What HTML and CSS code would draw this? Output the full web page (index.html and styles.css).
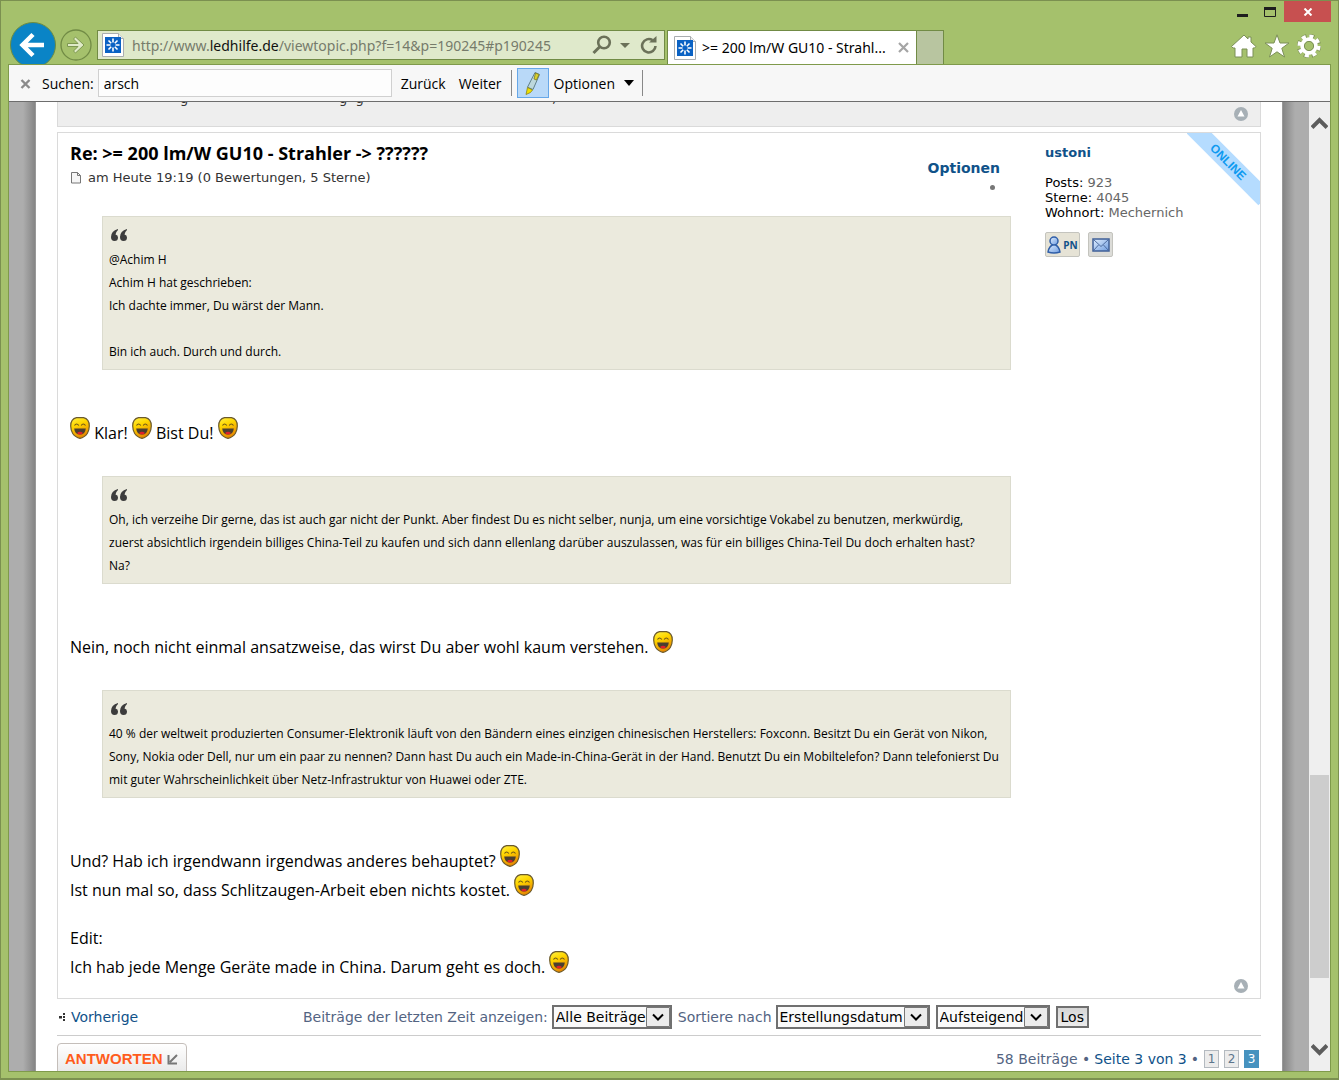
FILE: index.html
```html
<!DOCTYPE html>
<html lang="de">
<head>
	<meta charset="UTF-8">
	<title>&gt;= 200 lm/W GU10 - Strahler</title>
	<link rel="stylesheet" href="styles.css">
</head>
<body>
<svg class="defs" width="0" height="0">
	<defs>
		<linearGradient id="face" x1="0" y1="0" x2="0.4" y2="1">
			<stop offset="0" stop-color="#fff04a"/>
			<stop offset="0.4" stop-color="#ffd800"/>
			<stop offset="1" stop-color="#e88a00"/>
		</linearGradient>
		<linearGradient id="blue" x1="0" y1="0" x2="1" y2="1">
			<stop offset="0" stop-color="#e2efff"/>
			<stop offset="1" stop-color="#6f9de0"/>
		</linearGradient>
	</defs>
	<symbol id="smile" viewBox="0 0 20 22">
		<path d="M6.500.700h7Q19.300 2 19.300 9q0 4-2 7.500Q14.500 20.500 10 21.300Q5.500 20.500 2.700 16.500Q.700 13 .700 9Q.700 2 6.500.700z" fill="url(#face)" stroke="#6b5a2c" stroke-width="1.200"/>
		<path d="M4.500 8.500q2-3 4.300 0M11.200 8.500q2-3 4.300 0" fill="none" stroke="#6b5418" stroke-width="1.100"/>
		<path d="M4.200 11.500h11.600q-.5 6-5.800 6t-5.800-6z" fill="#4a3f30"/>
		<path d="M7 16q3-2.500 6 0q-1.200 1.500-3 1.500T7 16z" fill="#e0202a"/>
	</symbol>
	<symbol id="quote" viewBox="0 0 18 14">
		<path d="M8 1Q1 3 1 9q0 4 3.500 4T8 9.500Q8 7 5.500 6.500Q6 3.500 8 2zM17 1q-7 2-7 8q0 4 3.500 4T17 9.500q0-2.500-2.500-3Q15 3.500 17 2z" fill="#3c3c3c"/>
	</symbol>
	<symbol id="favicon" viewBox="0 0 22 24">
		<path d="M.5.500h16l5 5v18H.5z" fill="#fff" stroke="#a9adb0"/>
		<path d="M16.500.500v5h5" fill="#eee" stroke="#a9adb0"/>
		<path d="M3 4h16v16H3z" fill="#0a62c4"/>
		<path d="M11 5.500v4M11 14.500v4M4.500 12h4M13.500 12h4M6.500 7.500l2.700 2.700M12.800 13.800l2.700 2.700M15.500 7.500l-2.700 2.700M9.200 13.800l-2.700 2.700" stroke="#fff" stroke-width="1.600"/>
	</symbol>
	<symbol id="totop" viewBox="0 0 14 14">
		<circle cx="7" cy="7" r="7" fill="#a7b0b6"/>
		<path d="M7 3l3.500 6.500h-7z" fill="#fff"/>
	</symbol>
</svg>

<div class="window">
	<div class="captions">
		<button aria-label="Minimieren"><svg width="12" height="12"><path d="M1 9.500h11" stroke="#1e1e1e" stroke-width="3"/></svg></button>
		<button aria-label="Maximieren"><svg width="12" height="12"><path d="M.5 2.500h11v8H.5z" fill="none" stroke="#1e1e1e"/><path d="M0 2.500h12" stroke="#1e1e1e" stroke-width="3"/></svg></button>
		<button class="close" aria-label="Schließen"><svg width="10" height="8"><path d="M1.500 0.500l7 7M8.500 0.500l-7 7" stroke="#fff" stroke-width="2"/></svg></button>
	</div>

	<div class="navbar">
		<button class="back" aria-label="Zurück"><svg width="46" height="46" viewBox="0 0 46 46"><circle cx="23" cy="23" r="22.500" fill="#0a84c6" stroke="#6f8c3e"/><path d="M12 23h22M23 12.500L12.500 23L23 33.500" fill="none" stroke="#fff" stroke-width="4.500"/></svg></button>
		<button class="forward" aria-label="Vorwärts"><svg width="32" height="32" viewBox="0 0 32 32"><circle cx="16" cy="16" r="15" fill="none" stroke="#718b45" stroke-width="1.300"/><path d="M7.500 14.500h10.500l-4.500-4.500l2-2L24 16l-8.500 8l-2-2l4.500-4.500H7.500z" fill="#e0ebc8" stroke="#7d9850"/></svg></button>
		<div class="address">
			<svg width="22" height="24"><use href="#favicon"/></svg>
			<p class="url">http://www.<b>ledhilfe.de</b>/viewtopic.php?f=14&amp;p=190245#p190245</p>
			<svg width="20" height="20" viewBox="0 0 20 20"><circle cx="12" cy="7.500" r="5.800" fill="none" stroke="#6b7159" stroke-width="2.600"/><path d="M8 11.500L1.500 18" stroke="#6b7159" stroke-width="3"/></svg>
			<svg width="10" height="5"><path d="M0 0h10l-5 5z" fill="#6b7159"/></svg>
			<svg width="18" height="20" viewBox="0 0 18 20"><path d="M15.500 11a6.700 6.700 0 1 1-3-5.800" fill="none" stroke="#6b7159" stroke-width="2.600"/><path d="M9 7.500h7.500V1z" fill="#6b7159"/></svg>
		</div>
		<div class="tab">
			<svg width="22" height="24"><use href="#favicon"/></svg>
			<span>&gt;= 200 lm/W GU10 - Strahl...</span>
			<svg width="11" height="11"><path d="M1 1l9 9M10 1l-9 9" stroke="#a5a5a5" stroke-width="2.200"/></svg>
		</div>
		<button class="newtab" aria-label="Neue Registerkarte"></button>
		<div class="tools">
			<svg width="26" height="24" viewBox="0 0 26 24"><path d="M13 1l4 4V3h3v5l5 4.500l-1.500 1.500H22v9h-6v-8h-5v8H4v-9H2L.5 12.500z" fill="#fff" stroke="#7b8f57"/></svg>
			<svg width="26" height="24" viewBox="0 0 26 24"><path d="M13 .8l3 8.200h9l-7.200 5.300l2.700 8.700L13 17.800L5.500 23l2.700-8.700L1 9h9z" fill="#fff" stroke="#7b8f57"/></svg>
			<svg width="24" height="24" viewBox="0 0 24 24"><circle cx="12" cy="12" r="9.800" fill="none" stroke="#7b8f57" stroke-width="4.600" stroke-dasharray="4.900 2.800"/><circle cx="12" cy="12" r="9.800" fill="none" stroke="#fff" stroke-width="3.600" stroke-dasharray="4.100 3.600"/><circle cx="12" cy="12" r="6.800" fill="none" stroke="#fff" stroke-width="3.800"/><circle cx="12" cy="12" r="4.600" fill="none" stroke="#7b8f57"/></svg>
		</div>
	</div>

	<div class="client">
		<div class="findbar">
			<button class="findclose" aria-label="Suchleiste schließen"><svg width="11" height="10"><path d="M1.500 1l8 8M9.500 1l-8 8" stroke="#8b8b8b" stroke-width="2.400"/></svg></button>
			<label for="find">Suchen:</label>
			<input id="find" type="text" value="arsch">
			<button>Zurück</button>
			<button>Weiter</button>
			<i class="sep"></i>
			<button class="marker" aria-label="Markieren"><svg width="18" height="24" viewBox="0 0 18 24"><path d="M11 1.500l4.500 2L9 18.500l-5.500-2.300z" fill="#bcd7dc" stroke="#5f7f88"/><path d="M11.500 2l3.500 1.500l-2.500 5.500l-2.500-1z" fill="#d8d02c" stroke="#7d7a20" stroke-width=".8"/><path d="M3.500 16.500L8.500 19l-2 2.500L2 23.500z" fill="#f0e000" stroke="#8a8416" stroke-width=".8"/></svg></button>
			<button class="options">Optionen <svg width="10" height="6"><path d="M0 0h10L5 6z" fill="#000"/></svg></button>
			<i class="sep"></i>
		</div>

		<div class="view">
			<div class="shade"></div>
			<main class="page">
				<div class="post previous">
					<p class="cut"><span>g</span><span>g&nbsp; g</span><span>,</span></p>
					<a href="#top" aria-label="Nach oben"><svg width="14" height="14"><use href="#totop"/></svg></a>
				</div>

				<article class="post">
					<div class="postbody">
						<div class="posthead">
							<div>
								<h3>Re: &gt;= 200 lm/W GU10 - Strahler -&gt; ??????</h3>
								<p class="author"><svg width="12" height="12" viewBox="0 0 12 12"><path d="M1.500.500h6l3 3v7.500h-9z" fill="#f6f6f6" stroke="#777"/><path d="M7.500.500v3h3" fill="none" stroke="#777"/></svg> am Heute 19:19 (0 Bewertungen, 5 Sterne)</p>
							</div>
							<div class="postoptions"><a href="#options">Optionen</a><i></i></div>
						</div>
						<blockquote>
							<svg width="18" height="14"><use href="#quote"/></svg>
							<p>@Achim H<br>Achim H hat geschrieben:<br>Ich dachte immer, Du wärst der Mann.<br><br>Bin ich auch. Durch und durch.</p>
						</blockquote>
						<p><svg class="smile"><use href="#smile"/></svg> Klar! <svg class="smile"><use href="#smile"/></svg> Bist Du! <svg class="smile"><use href="#smile"/></svg></p>
						<blockquote>
							<svg width="18" height="14"><use href="#quote"/></svg>
							<p>Oh, ich verzeihe Dir gerne, das ist auch gar nicht der Punkt. Aber findest Du es nicht selber, nunja, um eine vorsichtige Vokabel zu benutzen, merkwürdig,<br>zuerst absichtlich irgendein billiges China-Teil zu kaufen und sich dann ellenlang darüber auszulassen, was für ein billiges China-Teil Du doch erhalten hast?<br>Na?</p>
						</blockquote>
						<p>Nein, noch nicht einmal ansatzweise, das wirst Du aber wohl kaum verstehen. <svg class="smile"><use href="#smile"/></svg></p>
						<blockquote>
							<svg width="18" height="14"><use href="#quote"/></svg>
							<p>40 % der weltweit produzierten Consumer-Elektronik läuft von den Bändern eines einzigen chinesischen Herstellers: Foxconn. Besitzt Du ein Gerät von Nikon,<br>Sony, Nokia oder Dell, nur um ein paar zu nennen? Dann hast Du auch ein Made-in-China-Gerät in der Hand. Benutzt Du ein Mobiltelefon? Dann telefonierst Du<br>mit guter Wahrscheinlichkeit über Netz-Infrastruktur von Huawei oder ZTE.</p>
						</blockquote>
						<p>Und? Hab ich irgendwann irgendwas anderes behauptet? <svg class="smile"><use href="#smile"/></svg><br>Ist nun mal so, dass Schlitzaugen-Arbeit eben nichts kostet. <svg class="smile"><use href="#smile"/></svg></p>
						<p>Edit:<br>Ich hab jede Menge Geräte made in China. Darum geht es doch. <svg class="smile"><use href="#smile"/></svg></p>
					</div>

					<aside class="profile">
						<div>
							<a class="user" href="#ustoni">ustoni</a>
							<dl>
								<div><dt>Posts:</dt> <dd>923</dd></div>
								<div><dt>Sterne:</dt> <dd>4045</dd></div>
								<div><dt>Wohnort:</dt> <dd>Mechernich</dd></div>
							</dl>
							<div class="contact">
								<a class="pn" href="#pn"><svg width="14" height="18" viewBox="0 0 14 18"><path d="M7 8q-5 2-6 8q6 2 12 0q-1-6-6-8z" fill="url(#blue)" stroke="#2f5ea8" stroke-width="1.500"/><circle cx="7" cy="5" r="4" fill="url(#blue)" stroke="#2f5ea8" stroke-width="1.500"/></svg>PN</a>
								<a class="mail" href="#mail" aria-label="E-Mail"><svg width="18" height="14" viewBox="0 0 18 14"><path d="M1 1h16v12H1z" fill="url(#blue)" stroke="#3f5f96" stroke-width="1.500"/><path d="M1.500 1.500L9 8.500l7.500-7M1.500 12.500L6.500 7M16.500 12.500L11.500 7" fill="none" stroke="#4d6ca0"/></svg></a>
							</div>
						</div>
						<a class="totop" href="#top" aria-label="Nach oben"><svg width="14" height="14"><use href="#totop"/></svg></a>
					</aside>
					<div class="online"><span>ONLINE</span></div>
				</article>

				<form class="sortbar">
					<a class="prev" href="#prev"><svg width="8" height="8"><path d="M4 0h2v2H4zM0 3h3v2.500H0zM4 3h2v2H4zM4 6h2v2H4z" fill="#333"/></svg>Vorherige</a>
					<label for="st">Beiträge der letzten Zeit anzeigen:</label>
					<span class="select"><select id="st"><option>Alle Beiträge</option></select><svg class="drop" viewBox="0 0 24 20"><path d="M.5.500h23v19H.5z" fill="#ececec" stroke="#777"/><path d="M7 7.500l5 5l5-5" fill="none" stroke="#000" stroke-width="2"/></svg></span>
					<label for="sk">Sortiere nach</label>
					<span class="select"><select id="sk"><option>Erstellungsdatum</option></select><svg class="drop" viewBox="0 0 24 20"><path d="M.5.500h23v19H.5z" fill="#ececec" stroke="#777"/><path d="M7 7.500l5 5l5-5" fill="none" stroke="#000" stroke-width="2"/></svg></span>
					<span class="select"><select id="sd" aria-label="Reihenfolge"><option>Aufsteigend</option></select><svg class="drop" viewBox="0 0 24 20"><path d="M.5.500h23v19H.5z" fill="#ececec" stroke="#777"/><path d="M7 7.500l5 5l5-5" fill="none" stroke="#000" stroke-width="2"/></svg></span>
					<button type="button">Los</button>
				</form>

				<div class="actions">
					<a class="reply" href="#reply">ANTWORTEN <svg width="11" height="11"><path d="M10 1L3 8M1.500 1v8.500H10" fill="none" stroke="#777" stroke-width="2"/></svg></a>
					<p class="pages">58 Beiträge • <a href="#pages">Seite 3 von 3</a> • <a class="num" href="#p1">1</a><a class="num" href="#p2">2</a><strong class="num">3</strong></p>
				</div>
			</main>
			<div class="shade right"></div>
			<div class="scroll">
				<svg width="17" height="14"><path d="M1 11.500L8.500 4L16 11.500" fill="none" stroke="#5c5c5c" stroke-width="4"/></svg>
				<i class="thumb"></i>
				<svg width="17" height="14"><path d="M1 2.500L8.500 10L16 2.500" fill="none" stroke="#5c5c5c" stroke-width="4"/></svg>
			</div>
		</div>
	</div>
</div>
</body>
</html>
```
FILE: styles.css
```css
*{ margin: 0; padding: 0; box-sizing: border-box; }
body{ height: 100vh; overflow: hidden; font-family: Verdana, "DejaVu Sans", sans-serif; font-size: 14px; color: #000; }
a{ color: #105289; text-decoration: none; }
button{ border: 0; background: none; font: inherit; }
svg{ flex: none; }
.defs{ position: absolute; }

/* window frame */
.window{ height: 100vh; display: flex; flex-direction: column; background: #a5c16c; border: 1px solid #7b9050; border-bottom-width: 2px; padding: 0 7px 6px; font-family: "Segoe UI", "Open Sans", sans-serif; }
.captions{ display: flex; justify-content: flex-end; align-items: center; height: 21px; }
.captions button{ width: 28px; height: 21px; display: flex; align-items: center; justify-content: center; }
.captions .close{ width: 47px; background: #c75050; }
.navbar{ display: flex; align-items: flex-end; height: 42px; }
.back{ width: 46px; height: 42px; margin-left: 2px; overflow: hidden; }
.back svg, .forward svg{ display: block; }
.forward{ margin: 0 5px 3px 4px; }
.address{ display: flex; align-items: center; gap: 8px; flex: 0 1 568px; height: 30px; margin: 0 2px 4px 0; padding: 0 6px 0 4px; background: #dfe9cb; border: 1px solid #718b45; }
.address svg:last-child{ margin-left: 2px; }
.url{ flex: 1; color: #767b6b; white-space: nowrap; font-family: "Segoe UI", "Noto Sans", sans-serif; font-size: 14px; }
.url b{ font-weight: normal; color: #111; }
.tab{ display: flex; align-items: center; gap: 6px; width: 250px; height: 34px; padding: 0 7px 0 6px; background: #fff; border: 1px solid #718b45; border-bottom: 0; font-family: "Segoe UI", "Noto Sans", sans-serif; font-size: 14px; white-space: nowrap; }
.tab span{ flex: 1; }
.newtab{ width: 27px; height: 34px; background: #b8c5a0; border: 1px solid #718b45; border-width: 1px 1px 0 0; }
.tools{ display: flex; align-items: center; gap: 7px; margin-left: auto; padding: 0 10px 6px 0; }
.client{ flex: 1; min-height: 0; display: flex; flex-direction: column; border: 1px solid #7f9a4b; }

/* find bar */
.findbar{ display: flex; align-items: center; height: 37px; padding-left: 11px; background: #f7f7f7; border-bottom: 1px solid #6d6d6d; font-size: 14px; }
.findbar label{ margin-right: 4px; }
.findbar input{ width: 294px; height: 28px; margin-right: 9px; padding: 0 5px; border: 1px solid #d0d0d0; background: #fdfdfd; font: inherit; }
.findbar button{ margin-right: 13px; }
.findbar .findclose{ width: 11px; margin-right: 11px; }
.sep{ width: 1px; height: 26px; background: #888; }
.findbar .sep:first-of-type{ margin: 0 5px 0 -4px; }
.findbar .marker{ width: 32px; height: 30px; margin-right: 5px; background: #b9d9f8; border: 1px solid #66a7e8; display: flex; align-items: center; justify-content: center; }
.findbar .options{ display: flex; align-items: center; gap: 9px; margin-right: 8px; }

/* page area */
.view{ flex: 1; min-height: 0; display: flex; overflow: hidden; font-family: Verdana, "DejaVu Sans", sans-serif; }
.shade{ width: 27px; background: linear-gradient(to left, #858585, #adadad 12px); border-right: 1px solid #999; }
.shade.right{ background: linear-gradient(to right, #858585, #adadad 12px); border-right: 0; border-left: 1px solid #999; }
.page{ flex: 1; min-width: 0; padding: 0 21px; background: #fff; overflow: hidden; }
.scroll{ width: 21px; display: flex; flex-direction: column; align-items: center; background: #efefef; padding: 14px 0; }
.thumb{ width: 19px; height: 203px; margin: auto 0 65px; background: #cdcdcd; }

.post{ position: relative; display: flex; border: 1px solid #dadada; overflow: hidden; }
.previous{ height: 25px; margin-bottom: 5px; background: #eee; border-top: 0; justify-content: space-between; padding: 5px 12px 0; }
.cut{ display: flex; margin-top: -17px; padding-left: 110px; font-size: 13px; line-height: 17px; color: #333; }
.cut span{ width: 159px; }
.cut span:nth-child(2){ width: 213px; }

.postbody{ flex: 1; min-width: 0; padding: 8px 34px 16px 12px; font: 16px/29px "Trebuchet MS", "Open Sans", sans-serif; }
.posthead{ display: flex; justify-content: space-between; height: 75px; margin-right: 11px; }
.posthead h3{ font-size: 18px; line-height: 24px; }
.author{ display: flex; align-items: center; gap: 6px; font: 13px/26px Verdana, "DejaVu Sans", sans-serif; color: #333; }
.postoptions{ display: flex; flex-direction: column; align-items: flex-end; padding-top: 17px; font: bold 14px/20px Verdana, "DejaVu Sans", sans-serif; }
.postoptions i{ width: 5px; height: 5px; margin: 7px 5px; border-radius: 50%; background: #777; }
blockquote{ margin: 28px 0 49px 32px; padding: 11px 6px 6px; background: #ebeadd; border: 1px solid #dbdbce; }
.posthead + blockquote{ margin-top: 0; }
blockquote svg{ display: block; margin: 0 0 6px 1px; }
blockquote p{ font-size: 12px; line-height: 23px; white-space: nowrap; }
.postbody p + p{ margin-top: 19px; }
.smile{ width: 20px; height: 22px; margin-top: -4px; }

.profile{ display: flex; flex-direction: column; justify-content: space-between; width: 215px; padding: 10px 12px 5px 0; font-size: 13px; line-height: 15px; }
.user{ display: block; line-height: 20px; font-weight: bold; }
.profile dl{ margin: 12px 0; }
.profile dt, .profile dd{ display: inline; }
.profile dd{ color: #666; }
.contact{ display: flex; gap: 8px; }
.contact a{ display: flex; align-items: center; justify-content: center; gap: 2px; height: 25px; border: 1px solid #c4c4be; border-radius: 2px; background: #e6e3d6; font: bold 10px/12px "Open Sans", sans-serif; }
.pn{ width: 35px; }
.contact .mail{ width: 25px; background: #dcdcd8; }
.totop{ align-self: flex-end; height: 14px; }
.online{ position: absolute; top: 0; right: 0; width: 73px; height: 73px; overflow: hidden; }
.online span{ position: absolute; top: 20px; left: -11px; width: 104px; height: 18px; transform: rotate(45deg); background: #b5dcff; color: #0e9af0; font: bold 12px/18px "Liberation Sans", sans-serif; text-align: center; }

.sortbar{ display: flex; align-items: center; height: 37px; border-bottom: 1px solid #ccc; color: #536482; white-space: nowrap; }
.prev{ display: flex; align-items: center; gap: 4px; width: 246px; padding-left: 2px; }
.sortbar label{ margin-right: 4px; }
.select{ position: relative; margin-right: 6px; }
.select select{ appearance: none; display: block; height: 24px; padding: 0 24px 0 2px; border: 2px solid #707070; background: #fafafa; font: inherit; color: #000; }
.drop{ position: absolute; top: 2px; right: 2px; width: 24px; height: 20px; pointer-events: none; }
.sortbar button{ height: 22px; padding: 0 3px; border: 2px solid #707070; background: linear-gradient(#d6d6d6, #ececec); line-height: 18px; }
.actions{ display: flex; align-items: flex-start; justify-content: space-between; padding-top: 7px; }
.reply{ display: flex; align-items: center; gap: 4px; height: 32px; padding: 0 8px 0 7px; border: 1px solid #c4beba; border-radius: 4px; background: linear-gradient(#fff, #e8e8e8); color: #ff5c1c; font: bold 15px/30px "Liberation Sans", sans-serif; }
.pages{ display: flex; align-items: center; gap: 4px; height: 32px; padding-right: 2px; color: #536482; }
.num{ width: 15px; height: 18px; margin-left: 1px; border: 1px solid #b4bac0; background: #ececec; color: #5c758c; font-size: 12px; line-height: 16px; text-align: center; }
strong.num{ background: #4692bf; border-color: #4692bf; color: #fff; font-weight: normal; }
```
